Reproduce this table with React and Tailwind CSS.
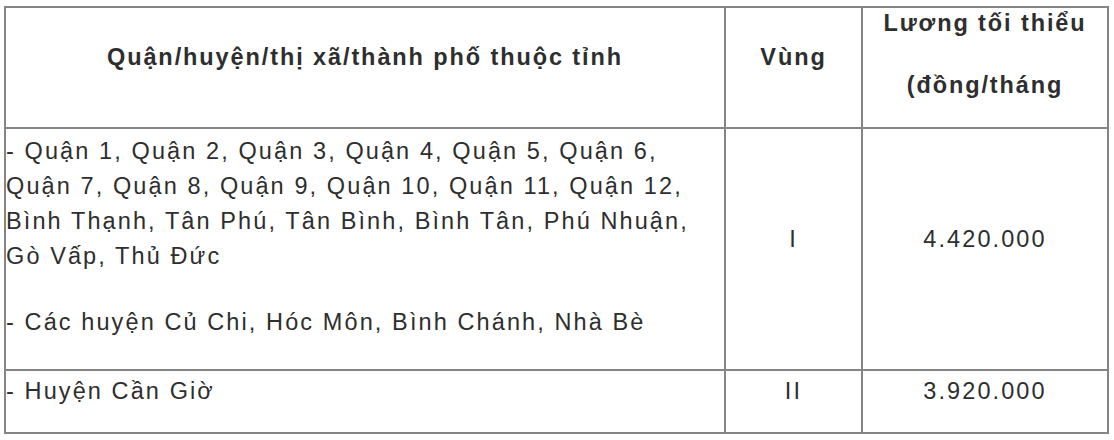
import React from 'react';

const rows = [
  {
    lines: [
      '- Quận 1, Quận 2, Quận 3, Quận 4, Quận 5, Quận 6,',
      'Quận 7, Quận 8, Quận 9, Quận 10, Quận 11, Quận 12,',
      'Bình Thạnh, Tân Phú, Tân Bình, Bình Tân, Phú Nhuận,',
      'Gò Vấp, Thủ Đức',
    ],
    extra: '- Các huyện Củ Chi, Hóc Môn, Bình Chánh, Nhà Bè',
    zone: 'I',
    wage: '4.420.000',
  },
  { lines: ['- Huyện Cần Giờ'], zone: 'II', wage: '3.920.000' },
];

export default function App() {
  return (
    <div className="w-[1114px] h-[440px] bg-white pt-[6px] pl-[4px] text-[#2e2e2e] font-['Liberation_Sans',Arial,sans-serif] text-[23.5px] tracking-[2.1px]">
      <div className="w-[1105px] border-2 border-[#858585]">
        {/* Header */}
        <div className="grid grid-cols-[718px_137px_246px] h-[119px] font-bold leading-[30px] tracking-[1.9px]">
          <div className="text-center pt-[34px]">Quận/huyện/thị xã/thành phố thuộc tỉnh</div>
          <div className="text-center pt-[34px] border-l-2 border-[#858585]">Vùng</div>
          <div className="text-center border-l-2 border-[#858585]">
            <p>Lương tối thiểu</p>
            <p className="mt-[32px]">(đồng/tháng</p>
          </div>
        </div>

        {/* Row 1 */}
        <div className="grid grid-cols-[718px_137px_246px] h-[242px] border-t-2 border-[#858585] leading-[35px]">
          <div className="pt-[5px]">
            {rows[0].lines.map((l) => (
              <div key={l} className="whitespace-nowrap">{l}</div>
            ))}
            <div className="mt-[31px] whitespace-nowrap">{rows[0].extra}</div>
          </div>
          <div className="text-center pt-[93px] border-l-2 border-[#858585]">{rows[0].zone}</div>
          <div className="text-center pt-[93px] border-l-2 border-[#858585]">{rows[0].wage}</div>
        </div>

        {/* Row 2 */}
        <div className="grid grid-cols-[718px_137px_246px] h-[63px] border-t-2 border-[#858585] leading-[35px]">
          <div className="pt-[3px] whitespace-nowrap">{rows[1].lines[0]}</div>
          <div className="text-center pt-[3px] border-l-2 border-[#858585]">{rows[1].zone}</div>
          <div className="text-center pt-[3px] border-l-2 border-[#858585]">{rows[1].wage}</div>
        </div>
      </div>
    </div>
  );
}
